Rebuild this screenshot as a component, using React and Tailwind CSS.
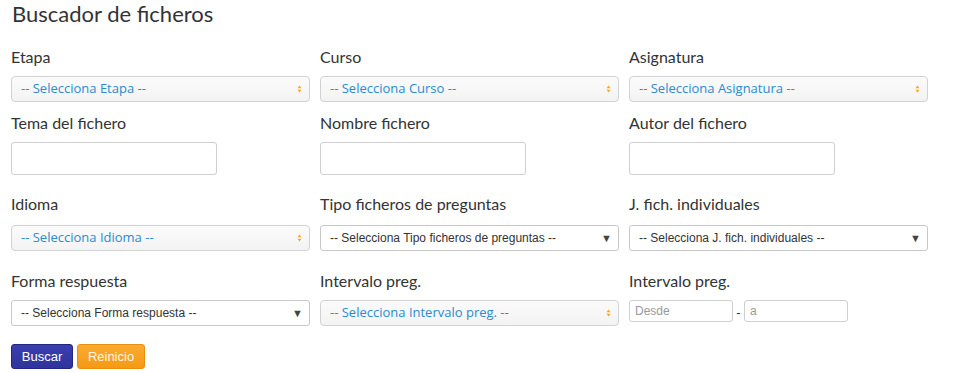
const ARIAL = { fontFamily: '"Liberation Sans", Arial, sans-serif' };

function UpDown() {
  return (
    <svg width="5" height="8" viewBox="0 0 5 8" className="shrink-0">
      <path d="M2.5 0.5 L4.5 3.2 L0.5 3.2 Z" fill="#f5a623" />
      <path d="M2.5 7.5 L4.5 4.8 L0.5 4.8 Z" fill="#f5a623" />
    </svg>
  );
}

// selects con estilo propio (texto azul, flechas naranjas)
function FancySelect({ text }) {
  return (
    <div className="flex items-center justify-between w-[299px] h-[26px] pl-[9px] pr-[7px] border border-[#d2d2d2] rounded-[4px] bg-gradient-to-b from-[#fbfbfb] to-[#f3f3f3]">
      <span className="text-[13px] text-[#2a8bd0] whitespace-nowrap" style={{ fontFamily: '"Open Sans", sans-serif' }}>{text}</span>
      <UpDown />
    </div>
  );
}

// selects nativos
function PlainSelect({ text }) {
  return (
    <div className="flex items-center justify-between w-[299px] h-[26px] pl-[9px] pr-[6px] border border-[#c8c8c8] rounded-[3px] bg-white" style={ARIAL}>
      <span className="text-[12px] text-[#333] whitespace-nowrap">{text}</span>
      <span className="text-[11px] text-[#444]">▼</span>
    </div>
  );
}

function TextBox() {
  return <div className="w-[206px] h-[33px] border border-[#cfcfcf] rounded-[3px] bg-white" />;
}

function Field({ label, wide, children }) {
  return (
    <div className="flex flex-col">
      <span className={`block text-[16px] leading-5 text-[#333] ${wide ? 'mb-[11px]' : 'mb-[9px]'}`}>{label}</span>
      {children}
    </div>
  );
}

export default function App() {
  return (
    <div className="w-[956px] h-[373px] bg-white pl-[11px] pt-[2px] overflow-hidden" style={{ fontFamily: 'Lato, "Open Sans", sans-serif' }}>
      <h1 className="text-[22px] leading-6 text-[#333] ml-px">Buscador de ficheros</h1>

      <div className="grid grid-cols-[299px_299px_299px] gap-x-[10px] mt-[21px]">
        <Field label="Etapa"><FancySelect text="-- Selecciona Etapa --" /></Field>
        <Field label="Curso"><FancySelect text="-- Selecciona Curso --" /></Field>
        <Field label="Asignatura"><FancySelect text="-- Selecciona Asignatura --" /></Field>
      </div>

      <div className="grid grid-cols-[299px_299px_299px] gap-x-[10px] mt-[11px]">
        <Field label="Tema del fichero"><TextBox /></Field>
        <Field label="Nombre fichero"><TextBox /></Field>
        <Field label="Autor del fichero"><TextBox /></Field>
      </div>

      <div className="grid grid-cols-[299px_299px_299px] gap-x-[10px] mt-[19px]">
        <Field wide label="Idioma"><FancySelect text="-- Selecciona Idioma --" /></Field>
        <Field wide label="Tipo ficheros de preguntas"><PlainSelect text="-- Selecciona Tipo ficheros de preguntas --" /></Field>
        <Field wide label="J. fich. individuales"><PlainSelect text="-- Selecciona J. fich. individuales --" /></Field>
      </div>

      <div className="grid grid-cols-[299px_299px_299px] gap-x-[10px] mt-[20px]">
        <Field label="Forma respuesta"><PlainSelect text="-- Selecciona Forma respuesta --" /></Field>
        <Field label="Intervalo preg."><FancySelect text="-- Selecciona Intervalo preg. --" /></Field>
        <Field label="Intervalo preg.">
          <div className="flex items-start" style={ARIAL}>
            <div className="w-[104px] h-[22px] border border-[#cfcfcf] rounded-[3px] bg-white pl-[5px] text-[12px] leading-5 text-[#999]">Desde</div>
            <span className="w-[11px] text-center text-[13px] leading-[26px] text-[#333]">-</span>
            <div className="w-[104px] h-[22px] border border-[#cfcfcf] rounded-[3px] bg-white pl-[5px] text-[12px] leading-5 text-[#999]">a</div>
          </div>
        </Field>
      </div>

      <div className="flex gap-[4px] mt-[18px]" style={ARIAL}>
        <button className="w-[62px] h-[25px] rounded-[3px] border border-[#23267e] bg-gradient-to-b from-[#3a3fb0] to-[#2f339c] text-white text-[13px]">Buscar</button>
        <button className="w-[68px] h-[25px] rounded-[3px] border border-[#e8900c] bg-gradient-to-b from-[#fbab2f] to-[#f59a12] text-[#fff6e6] text-[13px]">Reinicio</button>
      </div>
    </div>
  );
}
